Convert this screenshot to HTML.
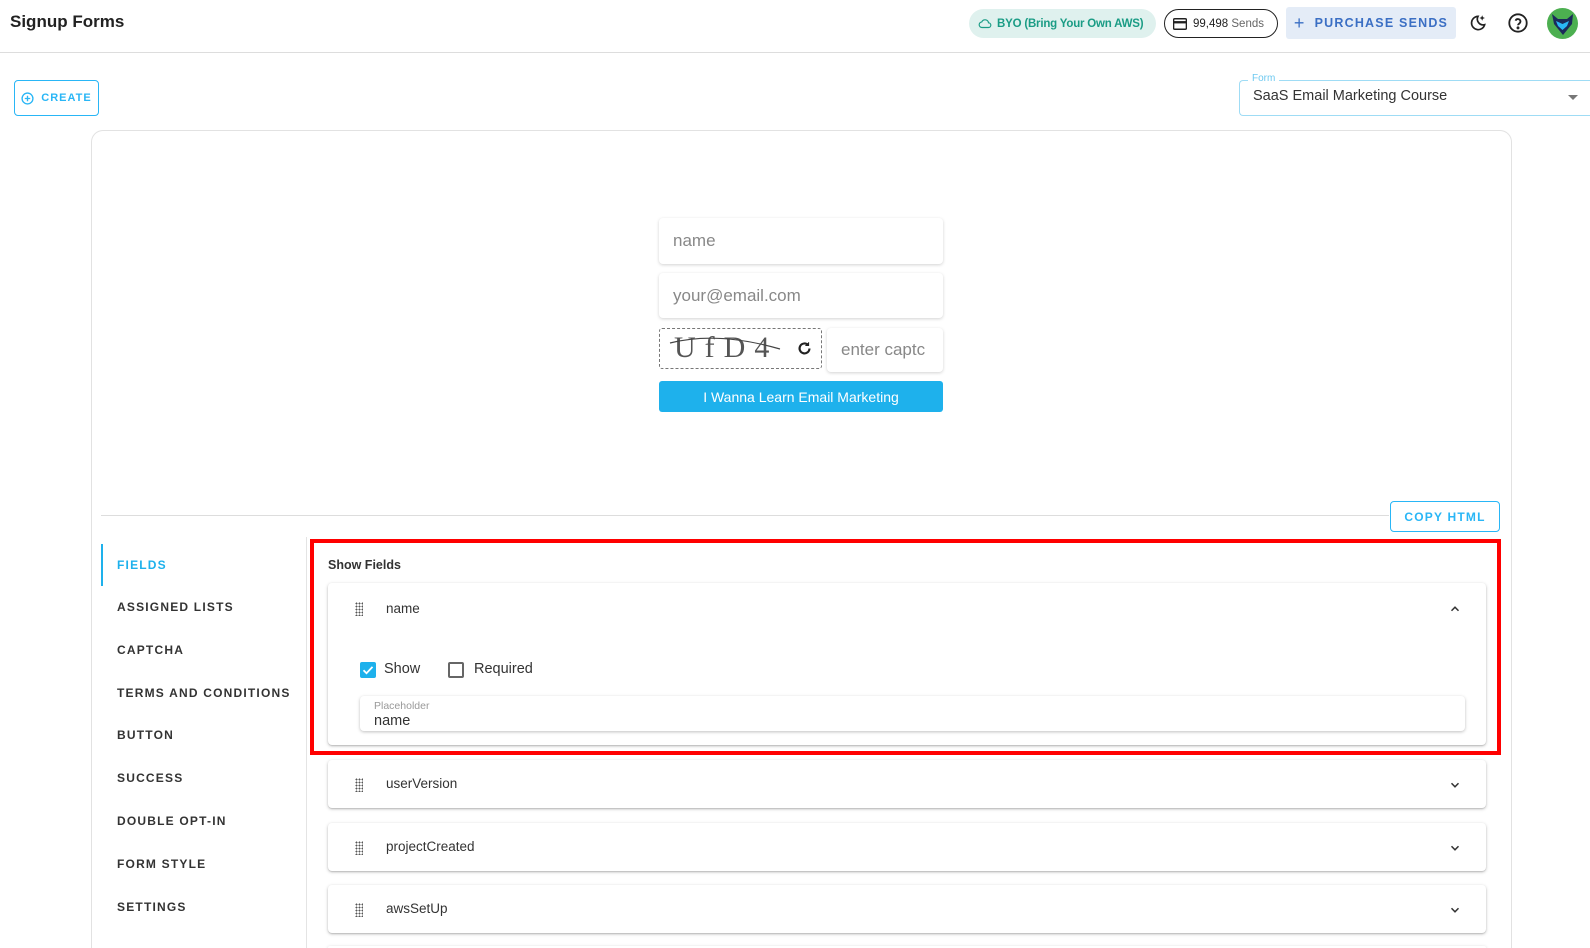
<!DOCTYPE html>
<html><head><meta charset="utf-8"><style>
*{box-sizing:border-box;margin:0;padding:0}
html,body{width:1590px;height:948px;overflow:hidden}
body{background:#fff;font-family:"Liberation Sans",Arial,sans-serif;color:#222;position:relative}
.a{position:absolute;white-space:nowrap}
.hdr{left:0;top:0;width:1590px;height:53px;border-bottom:1px solid #ddd}
.pill{display:flex;align-items:center;border-radius:15px;font-size:12px}
.nav{left:117px;font-size:12px;font-weight:bold;letter-spacing:1.2px;color:#333}
.card{left:328px;width:1158px;background:#fff;border-radius:4px;box-shadow:0 1px 3px rgba(0,0,0,.25),0 1px 1px rgba(0,0,0,.1)}
.drag{position:absolute;left:27px;width:8px;height:14px;background-image:radial-gradient(circle,#555 0.8px,transparent 1.1px);background-size:3px 3px}
.lbl{position:absolute;left:58px;font-size:13.5px;color:#333;white-space:nowrap}
.chev{position:absolute;left:1120px;width:14px;height:14px}
.inp{border-radius:4px;box-shadow:0 1px 3px rgba(0,0,0,.18);background:#fff;color:#888;font-size:17px;display:flex;align-items:center;padding-left:14px}
</style></head><body>
<div class="a hdr"></div>
<div class="a" style="left:10px;top:12px;font-size:17px;font-weight:bold;color:#222">Signup Forms</div>
<div class="a pill" style="left:969px;top:9px;width:187px;height:29px;background:#dff1ee;color:#1a9c85;padding-left:8px;font-weight:bold;font-size:11.5px;letter-spacing:-0.2px">
<svg width="16" height="14" viewBox="0 0 24 24" fill="none" stroke="#1a9c85" stroke-width="2"><path d="M7 18h11a4 4 0 0 0 0-8 6 6 0 0 0-11.5-1.5A4.5 4.5 0 0 0 7 18z"/></svg><span style="margin-left:4px">BYO (Bring Your Own AWS)</span></div>
<div class="a pill" style="left:1164px;top:9px;width:114px;height:29px;border:1.5px solid #222;padding-left:8px;color:#222;font-size:11.5px">
<svg width="14" height="12" viewBox="0 0 24 20"><rect x="1" y="1" width="22" height="18" rx="2" fill="none" stroke="#222" stroke-width="2.5"/><rect x="1" y="5" width="22" height="4" fill="#222"/></svg><span style="margin-left:6px">99,498 <span style="color:#666">Sends</span></span></div>
<div class="a" style="left:1286px;top:7px;width:170px;height:32px;background:#e4ecf7;border-radius:3px;color:#3b6fc4;font-size:12.5px;font-weight:bold;letter-spacing:1.2px;display:flex;align-items:center;justify-content:center"><span style="font-size:18px;font-weight:normal;margin-right:9px;line-height:1">+</span>PURCHASE SENDS</div>
<svg class="a" style="left:1468px;top:13px" width="20" height="20" viewBox="0 0 24 24" fill="none" stroke="#222" stroke-width="2"><path d="M12 4a8 8 0 1 0 8 10A7 7 0 0 1 12 4z"/><path d="M17 4l.6 1.4L19 6l-1.4.6L17 8l-.6-1.4L15 6l1.4-.6z" fill="#222" stroke-width="1"/></svg>
<svg class="a" style="left:1507px;top:12px" width="22" height="22" viewBox="0 0 24 24" fill="none" stroke="#222" stroke-width="2"><circle cx="12" cy="12" r="9.5"/><path d="M9.3 9.5a2.8 2.8 0 0 1 5.4 1c0 1.9-2.7 2.4-2.7 4"/><circle cx="12" cy="17.3" r=".6" fill="#222"/></svg>
<div class="a" style="left:1547px;top:8px;width:31px;height:31px;border-radius:50%;background:#4caf50;overflow:hidden"><svg width="31" height="31" viewBox="0 0 31 31"><path d="M5 6l6 5h9l6-5-1 10-9 11-9-11z" fill="#1b2a5a"/><path d="M9 13l6.5 3 6.5-3-2 5-4.5 4-4.5-4z" fill="#29b6f6"/></svg></div>

<div class="a" style="left:14px;top:80px;width:85px;height:36px;border:1px solid #29b6f6;border-radius:4px;color:#29b6f6;font-size:11px;font-weight:bold;letter-spacing:1px;display:flex;align-items:center;justify-content:center">
<svg width="13" height="13" viewBox="0 0 24 24" fill="none" stroke="#29b6f6" stroke-width="2.5" style="margin-right:7px"><circle cx="12" cy="12" r="10"/><path d="M12 7v10M7 12h10"/></svg>CREATE</div>
<div class="a" style="left:1239px;top:80px;width:351px;height:36px;border:1px solid #9fdcf5;border-right:none;border-radius:4px 0 0 4px"></div>
<div class="a" style="left:1248px;top:73px;background:#fff;padding:0 4px;font-size:10px;color:#6ec9f0">Form</div>
<div class="a" style="left:1253px;top:88px;font-size:14.5px;color:#333">SaaS Email Marketing Course</div>
<div class="a" style="left:1568px;top:95px;width:0;height:0;border-left:5px solid transparent;border-right:5px solid transparent;border-top:5px solid #777"></div>

<div class="a" style="left:91px;top:130px;width:1421px;height:818px;border:1px solid #e2e2e2;border-bottom:none;border-radius:12px 12px 0 0"></div>

<div class="a inp" style="left:659px;top:218px;width:284px;height:46px">name</div>
<div class="a inp" style="left:659px;top:273px;width:284px;height:45px">your@email.com</div>
<div class="a" style="left:659px;top:328px;width:163px;height:41px;border:1px dashed #777;border-radius:3px"></div>
<div class="a" style="left:674px;top:331px;font-family:'Liberation Serif',serif;font-size:30px;color:#555;letter-spacing:9px">UfD4</div>
<svg class="a" style="left:668px;top:333px" width="115" height="30"><path d="M2 10 Q50 -2 112 16" fill="none" stroke="#444" stroke-width="1.2"/></svg>
<svg class="a" style="left:796px;top:340px" width="17" height="17" viewBox="0 0 24 24" fill="none" stroke="#222" stroke-width="3"><path d="M19 12a7 7 0 1 1-2-5"/><path d="M18 3v5h-5" fill="#222" stroke-width="1"/></svg>
<div class="a inp" style="left:827px;top:328px;width:116px;height:44px">enter captc</div>
<div class="a" style="left:659px;top:381px;width:284px;height:31px;background:#1eb1ec;border-radius:3px;color:#fff;font-size:14px;display:flex;align-items:center;justify-content:center">I Wanna Learn Email Marketing</div>

<div class="a" style="left:101px;top:515px;width:1288px;height:1px;background:#ddd"></div>
<div class="a" style="left:1390px;top:501px;width:110px;height:31px;border:1px solid #29b6f6;border-radius:4px;color:#29b6f6;font-size:12px;font-weight:bold;letter-spacing:1.2px;display:flex;align-items:center;justify-content:center">COPY HTML</div>

<div class="a" style="left:101px;top:544px;width:2px;height:42px;background:#1eb1ec"></div>
<div class="a nav" style="top:558px;color:#1eb1ec">FIELDS</div>
<div class="a nav" style="top:600px">ASSIGNED LISTS</div>
<div class="a nav" style="top:643px">CAPTCHA</div>
<div class="a nav" style="top:686px">TERMS AND CONDITIONS</div>
<div class="a nav" style="top:728px">BUTTON</div>
<div class="a nav" style="top:771px">SUCCESS</div>
<div class="a nav" style="top:814px">DOUBLE OPT-IN</div>
<div class="a nav" style="top:857px">FORM STYLE</div>
<div class="a nav" style="top:900px">SETTINGS</div>
<div class="a" style="left:306px;top:537px;width:1px;height:411px;background:#e4e4e4"></div>

<div class="a" style="left:328px;top:558px;font-size:12.5px;font-weight:bold;color:#333">Show Fields</div>

<div class="a card" style="top:583px;height:162px">
<div class="drag" style="top:19px"></div><div class="lbl" style="top:18px">name</div>
<svg class="chev" style="top:19px" viewBox="0 0 24 24" fill="none" stroke="#333" stroke-width="2.6"><path d="M6 15l6-6 6 6"/></svg>
<div style="position:absolute;left:32px;top:79px;width:16px;height:16px;background:#1eb1ec;border-radius:2px"><svg width="16" height="16" viewBox="0 0 16 16"><path d="M3.5 8.2l3 3 6-6.3" fill="none" stroke="#fff" stroke-width="1.8"/></svg></div>
<div class="lbl" style="left:56px;top:78px;font-size:14.5px">Show</div>
<div style="position:absolute;left:120px;top:79px;width:16px;height:16px;border:2px solid #666;border-radius:2px"></div>
<div class="lbl" style="left:146px;top:78px;font-size:14.5px">Required</div>
<div style="position:absolute;left:32px;top:113px;width:1105px;height:35px;border-radius:4px;box-shadow:0 1px 3px rgba(0,0,0,.25)">
<div style="position:absolute;left:14px;top:4px;font-size:10.5px;color:#999">Placeholder</div>
<div style="position:absolute;left:14px;top:17px;font-size:14.5px;color:#333">name</div></div>
</div>

<div class="a card" style="top:760px;height:48px"><div class="drag" style="top:18px"></div><div class="lbl" style="top:16px">userVersion</div><svg class="chev" style="top:18px" viewBox="0 0 24 24" fill="none" stroke="#333" stroke-width="2.6"><path d="M6 9l6 6 6-6"/></svg></div>
<div class="a card" style="top:823px;height:48px"><div class="drag" style="top:18px"></div><div class="lbl" style="top:16px">projectCreated</div><svg class="chev" style="top:18px" viewBox="0 0 24 24" fill="none" stroke="#333" stroke-width="2.6"><path d="M6 9l6 6 6-6"/></svg></div>
<div class="a card" style="top:885px;height:48px"><div class="drag" style="top:18px"></div><div class="lbl" style="top:16px">awsSetUp</div><svg class="chev" style="top:18px" viewBox="0 0 24 24" fill="none" stroke="#333" stroke-width="2.6"><path d="M6 9l6 6 6-6"/></svg></div>
<div class="a card" style="top:946px;height:2px;border-radius:4px 4px 0 0"></div>

<div class="a" style="left:310px;top:539px;width:1191px;height:216px;border:4px solid #ff0000"></div>
</body></html>
